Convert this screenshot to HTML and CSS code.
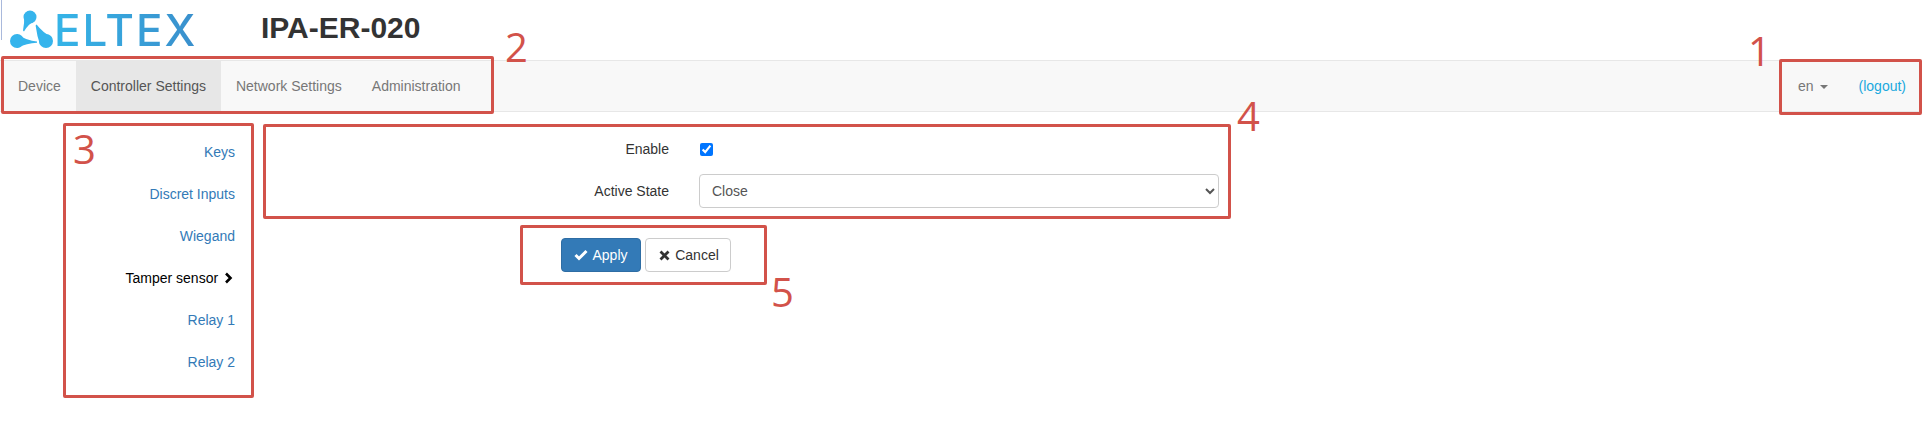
FILE: index.html
```html
<!DOCTYPE html>
<html lang="en">
<head>
  <meta charset="UTF-8" />
  <title>IPA-ER-020</title>
  <link rel="stylesheet" href="styles.css">
</head>

<body>
  <div class="edge-line"></div>

  <header class="top">
    <div class="logo">
      <svg class="logo-mark" width="46" height="42" viewBox="0 0 46 42" fill="#35b4ec">
        <circle cx="21" cy="8" r="6.500" />
        <path d="M26.800 10.900 Q19 15 15 22.500 L14 21.500 Q15.500 14 15.200 5.100 Z" />
        <circle cx="8" cy="32" r="7" />
        <path d="M8 25 Q18 32 28 32.500 L28 33.700 Q18 34 8 39 Z" />
        <circle cx="37" cy="32" r="7" />
        <path d="M42.900 28.300 Q34 24 27.600 15.600 L26.600 16.400 Q28 27 31.100 35.700 Z" />
      </svg>
      <span class="logo-text">ELTEX</span>
    </div>
    <h1>IPA-ER-020</h1>
  </header>

  <nav class="navbar">
    <ul class="nav-items">
      <li><a href="#">Device</a></li>
      <li class="active"><a href="#">Controller Settings</a></li>
      <li><a href="#">Network Settings</a></li>
      <li><a href="#">Administration</a></li>
    </ul>
    <div class="nav-right">
      <a class="lang" href="#">en <span class="caret"></span></a>
      <a class="logout" href="#">(logout)</a>
    </div>
  </nav>

  <main class="content">
    <ul class="side-menu">
      <li><a href="#">Keys</a></li>
      <li><a href="#">Discret Inputs</a></li>
      <li><a href="#">Wiegand</a></li>
      <li class="current">
        <a href="#">Tamper sensor</a>
        <svg class="chevron" width="9" height="12" viewBox="0 0 9 12">
          <path d="M2 1.500 L6.500 6 L2 10.500" fill="none" stroke="#000" stroke-width="2.600" />
        </svg>
      </li>
      <li><a href="#">Relay 1</a></li>
      <li><a href="#">Relay 2</a></li>
    </ul>

    <form class="settings">
      <div class="form-row check-row">
        <label for="enable">Enable</label>
        <input type="checkbox" id="enable" checked />
      </div>
      <div class="form-row">
        <label for="state">Active State</label>
        <select id="state">
          <option>Close</option>
          <option>Open</option>
        </select>
      </div>
      <div class="actions">
        <button type="button" class="btn btn-primary">
          <svg width="14" height="12" viewBox="0 0 14 12">
            <path d="M1.500 6 L5 9.500 L12.500 2" fill="none" stroke="#fff" stroke-width="3" />
          </svg>
          Apply
        </button>
        <button type="button" class="btn btn-default">
          <svg width="11" height="11" viewBox="0 0 11 11">
            <path d="M1.500 1.500 L9.500 9.500 M9.500 1.500 L1.500 9.500" fill="none" stroke="#333" stroke-width="2.800" />
          </svg>
          Cancel
        </button>
      </div>
    </form>
  </main>

  <!-- red callouts drawn over the screenshot -->
  <div class="mark mark-nav"></div>
  <div class="mark mark-user"></div>
  <div class="mark mark-side"></div>
  <div class="mark mark-form"></div>
  <div class="mark mark-btns"></div>
  <span class="num num-1">1</span>
  <span class="num num-2">2</span>
  <span class="num num-3">3</span>
  <span class="num num-4">4</span>
  <span class="num num-5">5</span>
</body>
</html>
```

FILE: styles.css
```css
* {
  box-sizing: border-box;
}

html,
body {
  height: 427px;
  overflow: hidden;
}

body {
  position: relative;
  margin: 0;
  font-family: 'Liberation Sans', Arial, sans-serif;
  font-size: 14px;
  color: #333;
  background: #fff;
}

ul {
  list-style: none;
  margin: 0;
  padding: 0;
}

a {
  text-decoration: none;
}

.edge-line {
  position: absolute;
  left: 1px;
  top: 0;
  width: 1px;
  height: 40px;
  background: #a9b9dc;
}

.top {
  display: flex;
  align-items: center;
  height: 60px;
  padding-left: 9px;
}

.logo {
  display: flex;
  align-items: center;
  width: 252px;
  height: 60px;
}

.logo-mark {
  flex: none;
}

.logo-text {
  margin-left: -1px;
  font-family: Inter, sans-serif;
  font-size: 44px;
  font-weight: 500;
  line-height: 1;
  letter-spacing: 2px;
  background: linear-gradient(to right, #35b5e8, #3a8fcc);
  -webkit-background-clip: text;
  -webkit-text-fill-color: transparent;
}

h1 {
  margin: -5px 0 0;
  font-size: 30px;
  font-weight: bold;
  color: #333;
}

.navbar {
  display: flex;
  justify-content: space-between;
  height: 52px;
  padding-left: 3px;
  background: #f8f8f8;
  border-top: 1px solid #e7e7e7;
  border-bottom: 1px solid #e7e7e7;
}

.nav-items {
  display: flex;
}

.nav-items a {
  display: block;
  padding: 15px;
  line-height: 20px;
  color: #777;
}

.nav-items .active a {
  background: #e7e7e7;
  color: #555;
}

.nav-right {
  display: flex;
  align-items: center;
  gap: 31px;
  padding-right: 16px;
}

.lang {
  color: #777;
}

.caret {
  display: inline-block;
  margin-left: 2px;
  vertical-align: middle;
  border-top: 4px solid #777;
  border-left: 4px solid transparent;
  border-right: 4px solid transparent;
}

.logout {
  color: #1aa9de;
}

.content {
  display: flex;
  padding-top: 19px;
}

.side-menu {
  width: 235px;
  flex: none;
}

.side-menu li {
  height: 42px;
  line-height: 42px;
  text-align: right;
}

.side-menu a {
  color: #337ab7;
}

.side-menu .current a {
  color: #000;
}

.chevron {
  margin: 0 2px 0 2px;
  vertical-align: -1px;
}

.settings {
  margin-left: 30px;
  width: 954px;
}

.form-row {
  display: flex;
  align-items: center;
  gap: 30px;
}

.form-row label {
  width: 404px;
  text-align: right;
}

.check-row {
  height: 36px;
  margin-bottom: 7px;
}

.check-row input {
  width: 13px;
  height: 13px;
  margin: 0 0 0 1px;
}

.form-row select {
  width: 520px;
  height: 34px;
  padding: 6px 8px;
  font: inherit;
  color: #555;
  background: #fff;
  border: 1px solid #ccc;
  border-radius: 4px;
}

.actions {
  display: flex;
  gap: 4px;
  margin-top: 30px;
  padding-left: 296px;
}

.btn {
  display: flex;
  align-items: center;
  justify-content: center;
  gap: 4px;
  height: 34px;
  font: inherit;
  border: 1px solid transparent;
  border-radius: 4px;
}

.btn-primary {
  width: 80px;
  color: #fff;
  background: #337ab7;
  border-color: #2e6da4;
}

.btn-default {
  width: 86px;
  gap: 5px;
  padding-left: 8px;
  color: #333;
  background: #fff;
  border-color: #ccc;
}

.mark {
  position: absolute;
  border: 3px solid #d2524a;
  border-radius: 2px;
}

.mark-nav {
  left: 1px;
  top: 56px;
  width: 493px;
  height: 58px;
}

.mark-user {
  left: 1779px;
  top: 59px;
  width: 143px;
  height: 56px;
}

.mark-side {
  left: 63px;
  top: 123px;
  width: 191px;
  height: 275px;
}

.mark-form {
  left: 263px;
  top: 124px;
  width: 968px;
  height: 95px;
}

.mark-btns {
  left: 520px;
  top: 225px;
  width: 247px;
  height: 60px;
}

.num {
  position: absolute;
  font-family: 'Open Sans', sans-serif;
  font-size: 40px;
  line-height: 40px;
  color: #d2524a;
}

.num-1 {
  left: 1748px;
  top: 31px;
}

.num-2 {
  left: 505px;
  top: 27px;
}

.num-3 {
  left: 73px;
  top: 129px;
}

.num-4 {
  left: 1237px;
  top: 96px;
}

.num-5 {
  left: 771px;
  top: 272px;
}
```
